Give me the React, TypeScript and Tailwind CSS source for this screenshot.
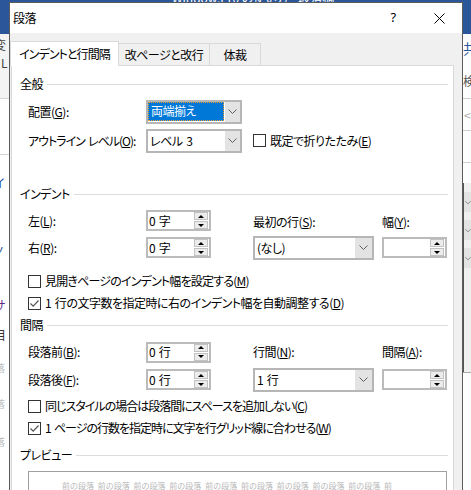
import React from 'react';

const jp = "font-['Noto_Sans_CJK_JP',sans-serif] [font-feature-settings:'palt']";

function Chevron() {
  return (
    <svg width="9" height="5" viewBox="0 0 9 5">
      <path d="M0.5 0.5 L4.5 4.5 L8.5 0.5" fill="none" stroke="#5f5f5f" strokeWidth="1" />
    </svg>
  );
}

function Combo({
  value,
  selected,
  className = 'w-[96px]',
  arrow = 'w-[15px]',
}: {
  value: string;
  selected?: boolean;
  className?: string;
  arrow?: string;
}) {
  return (
    <div className={`flex h-[24px] border-2 border-[#b6b6b6] bg-white ${className}`}>
      <div className="flex flex-1">
        {selected ? (
          <div className="mb-[1px] mr-[1px] flex flex-1 items-center border border-dotted border-[#f0a030] bg-[#0078d7] pl-[2px] text-white">
            {value}
          </div>
        ) : (
          <div className="flex flex-1 items-center pl-[2px]">{value}</div>
        )}
      </div>
      <div className={`flex items-center justify-center bg-[#e3e3e3] ${arrow}`}>
        <Chevron />
      </div>
    </div>
  );
}

function SpinBtn({ up }: { up?: boolean }) {
  return (
    <div className="flex h-[8px] w-[14px] items-center justify-center border border-[#c2c2c2] bg-[#ececec]">
      <svg width="6" height="3" viewBox="0 0 6 3">
        <path d={up ? 'M0 3 L3 0 L6 3 Z' : 'M0 0 L3 3 L6 0 Z'} fill="#000" />
      </svg>
    </div>
  );
}

function Spin({ value }: { value: string }) {
  return (
    <div className="flex h-[21px] w-[65px] items-center border-2 border-[#bbbbbb] bg-white">
      <div className="flex-1 pl-[1px]">{value}</div>
      <div className="mr-[1px] flex flex-col gap-[1px]">
        <SpinBtn up />
        <SpinBtn />
      </div>
    </div>
  );
}

function Check({
  checked,
  children,
  className = '',
  textClass = '',
}: {
  checked?: boolean;
  children: React.ReactNode;
  className?: string;
  textClass?: string;
}) {
  return (
    <div className={`flex items-center whitespace-nowrap ${className}`}>
      <div className="flex h-[13px] w-[13px] items-center justify-center border border-[#333333] bg-white">
        {checked && (
          <svg width="11" height="11" viewBox="0 0 11 11">
            <path d="M1.5 5.5 L4.2 8.2 L9.5 2.5" fill="none" stroke="#555555" strokeWidth="1.2" />
          </svg>
        )}
      </div>
      <span className={`ml-[4px] ${textClass}`}>{children}</span>
    </div>
  );
}

function Group({ title }: { title: string }) {
  return (
    <div className="flex h-[18px] items-center">
      <span>{title}</span>
      <div className="ml-[4px] h-px flex-1 bg-[#dcdcdc]" />
    </div>
  );
}

function Backdrop() {
  return (
    <div className={`absolute inset-0 flex flex-col ${jp}`}>
      <div className="relative h-[34px] bg-[#2b579a]">
        <span className="absolute left-[172px] top-[-11px] text-[12px] text-white">Windows 10 の使い方 - 段落稿</span>
      </div>
      <div className="relative flex-1 bg-white">
        {/* left edge of the Word window */}
        <div className="absolute left-0 top-0 h-[64px] w-[9px] bg-[#f3f3f3]" />
        <span className="absolute left-[-6px] top-[2px] text-[12px] text-[#444]">変</span>
        <span className="absolute left-[1px] top-[20px] text-[12px] text-[#444]">L</span>
        <div className="absolute left-0 top-[64px] h-px w-[9px] bg-[#d4d4d4]" />
        <div className="absolute left-0 top-[120px] h-px w-[9px] bg-[#d4d4d4]" />
        <span className="absolute left-[-6px] top-[140px] text-[12px] text-[#1a4fa0]">イ</span>
        <span className="absolute left-[-6px] top-[208px] text-[12px] text-[#1a4fa0]">ノ</span>
        <span className="absolute left-[-6px] top-[262px] text-[12px] text-[#5b2a86]">サ</span>
        <span className="absolute left-[-6px] top-[292px] text-[12px] text-[#333]">目</span>
        <span className="absolute left-[-5px] top-[326px] text-[10px] text-[#bbbbbb]">落</span>
        <span className="absolute left-[-5px] top-[362px] text-[10px] text-[#bbbbbb]">落</span>
        <span className="absolute left-[-5px] top-[400px] text-[10px] text-[#bbbbbb]">落</span>
        {/* right edge */}
        <span className="absolute left-[463px] top-[4px] text-[14px] text-[#2b579a]">共</span>
        <span className="absolute left-[463px] top-[38px] text-[12px] text-[#555]">検</span>
        <div className="absolute left-[463px] top-[64px] h-px w-[8px] bg-[#d0d0d0]" />
        <span className="absolute left-[464px] top-[72px] text-[12px] text-[#aaaaaa]">&lt;</span>
        <div className="absolute left-[463px] top-[96px] h-px w-[8px] bg-[#d0d0d0]" />
        <div className="absolute left-[463px] top-[128px] h-px w-[8px] bg-[#d0d0d0]" />
        <div className="absolute left-[463px] top-[149px] flex h-[189px] w-[8px] flex-col gap-[8px] border-l border-[#555] bg-[#f0f0f0] pt-[9px]">
          <div className="flex h-[20px] items-center bg-[#e3e3e3] pl-[1px]">
            <Chevron />
          </div>
          <div className="flex h-[20px] items-center bg-[#e3e3e3] pl-[1px]">
            <Chevron />
          </div>
          <div className="flex h-[20px] items-center bg-[#e3e3e3] pl-[1px]">
            <Chevron />
          </div>
        </div>
        <div className="absolute left-[463px] top-[338px] h-px w-[8px] bg-[#aaaaaa]" />
      </div>
    </div>
  );
}

function Dialog() {
  return (
    <div
      className={`absolute left-[9px] top-[2px] h-[510px] w-[454px] border border-[#5c5c5c] bg-[#f0f0f0] text-[12px] tracking-[-0.5px] text-black [word-spacing:1.5px] ${jp}`}
    >
      <div className="flex h-[30px] items-center bg-white pl-[3px]">
        <span className="flex-1">段落</span>
        <div className="flex w-[46px] items-center justify-center font-['Noto_Sans',sans-serif] text-[13px]">?</div>
        <div className="flex w-[46px] items-center justify-center">
          <svg width="11" height="11" viewBox="0 0 11 11">
            <path d="M0.5 0.5 L10.5 10.5 M10.5 0.5 L0.5 10.5" stroke="#000" strokeWidth="1" />
          </svg>
        </div>
      </div>

      <div className="pt-[8px]">
        <div className="flex h-[24px] items-end whitespace-nowrap">
          <div className="relative z-10 -mb-px flex h-[25px] w-[109px] items-center justify-center border border-b-0 border-[#d9d9d9] bg-white tracking-[-0.9px]">
            インデントと行間隔
          </div>
          <div className="flex h-[22px] w-[91px] items-center justify-center border border-l-0 border-b-0 border-[#d9d9d9]">
            改ページと改行
          </div>
          <div className="flex h-[22px] w-[51px] items-center justify-center border border-l-0 border-b-0 border-[#d9d9d9]">
            体裁
          </div>
        </div>

        <div className="ml-[1px] h-[460px] w-[443px] border border-[#d9d9d9] bg-white pl-[8px] pr-[5px] pt-[9px]">
          <Group title="全般" />
          <div className="mt-[4px] whitespace-nowrap pl-[8px]">
            <div className="flex h-[29px] items-center">
              <span className="w-[118px]">
                配置(<u>G</u>):
              </span>
              <Combo value="両端揃え" selected />
            </div>
            <div className="flex h-[29px] items-center">
              <span className="w-[118px] tracking-[-1px]">
                アウトライン レベル(<u>O</u>):
              </span>
              <Combo value="レベル 3" />
              <Check className="ml-[11px]">
                既定で折りたたみ(<u>E</u>)
              </Check>
            </div>
          </div>

          <div className="mt-[30px]">
            <Group title="インデント" />
          </div>
          <div className="mt-[4px] grid grid-cols-[118px_107px_129px_65px] grid-rows-[27px_27px] items-center whitespace-nowrap pl-[8px]">
            <span>
              左(<u>L</u>):
            </span>
            <Spin value="0 字" />
            <span className="mt-[3px]">
              最初の行(<u>S</u>):
            </span>
            <span className="mt-[3px]">
              幅(<u>Y</u>):
            </span>
            <span>
              右(<u>R</u>):
            </span>
            <Spin value="0 字" />
            <Combo value="(なし)" className="w-[121px]" arrow="w-[17px]" />
            <Spin value="" />
          </div>
          <div className="mt-[9px] pl-[8px]">
            <Check className="h-[22px]" textClass="tracking-[-0.8px]">
              見開きページのインデント幅を設定する(<u>M</u>)
            </Check>
            <Check className="h-[22px]" checked>
              1 行の文字数を指定時に右のインデント幅を自動調整する(<u>D</u>)
            </Check>
          </div>

          <div className="mt-[2px]">
            <Group title="間隔" />
          </div>
          <div className="mt-[4px] grid grid-cols-[118px_107px_129px_65px] grid-rows-[28px_27px] items-center whitespace-nowrap pl-[8px]">
            <span>
              段落前(<u>B</u>):
            </span>
            <Spin value="0 行" />
            <span>
              行間(<u>N</u>):
            </span>
            <span>
              間隔(<u>A</u>):
            </span>
            <span>
              段落後(<u>F</u>):
            </span>
            <Spin value="0 行" />
            <Combo value="1 行" className="w-[121px]" arrow="w-[17px]" />
            <Spin value="" />
          </div>
          <div className="mt-[2px] pl-[8px]">
            <Check className="h-[22px]" textClass="tracking-[-1px]">
              同じスタイルの場合は段落間にスペースを追加しない(<u>C</u>)
            </Check>
            <Check className="h-[22px]" checked textClass="tracking-[-1px]">
              1 ページの行数を指定時に文字を行グリッド線に合わせる(<u>W</u>)
            </Check>
          </div>

          <div className="mt-[7px]">
            <Group title="プレビュー" />
          </div>
          <div className="ml-[8px] mt-[7px] h-[60px] w-[419px] overflow-hidden border border-[#a0a0a0] bg-white pl-[33px] pt-[8px]">
            <div className="w-[336px] font-['Noto_Sans_CJK_JP',sans-serif] text-[8px] leading-[11px] tracking-normal text-[#b8b8b8] [font-feature-settings:normal] [word-spacing:2px]">
              前の段落 前の段落 前の段落 前の段落 前の段落 前の段落 前の段落 前の段落 前の段落 前の段落 前の段落 前の段落 前の段落 前の段落 前の段落 前の段落 前の段落 前の段落
            </div>
          </div>
        </div>
      </div>
    </div>
  );
}

export default function App() {
  return (
    <div className="relative h-[490px] w-[471px] overflow-hidden bg-white">
      <Backdrop />
      <Dialog />
    </div>
  );
}
